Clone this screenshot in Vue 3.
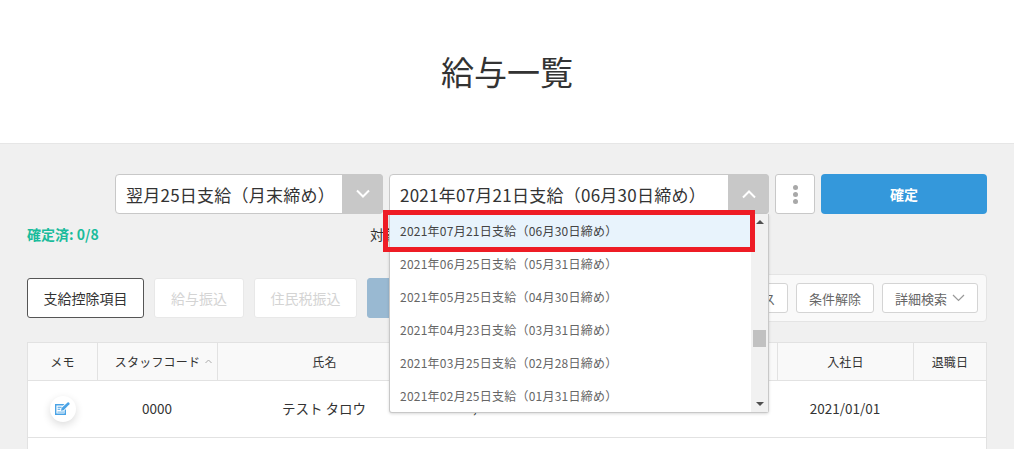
<script setup>
const options = [
  '2021年07月21日支給（06月30日締め）',
  '2021年06月25日支給（05月31日締め）',
  '2021年05月25日支給（04月30日締め）',
  '2021年04月23日支給（03月31日締め）',
  '2021年03月25日支給（02月28日締め）',
  '2021年02月25日支給（01月31日締め）'
]
</script>

<template>
  <div class="page">
    <header class="head"><h1>給与一覧</h1></header>
    <main class="body">
      <div class="controls">
        <div class="select first">
          <span class="value">翌月25日支給（月末締め）</span>
          <span class="arrow">
            <svg width="16" height="10" viewBox="0 0 16 10"><path d="M2 1.5 8 7.5 14 1.5" fill="none" stroke="#fff" stroke-width="2"/></svg>
          </span>
        </div>
        <div class="select second">
          <span class="value">2021年07月21日支給（06月30日締め）</span>
          <span class="arrow">
            <svg width="16" height="10" viewBox="0 0 16 10"><path d="M2 8.5 8 2.5 14 8.5" fill="none" stroke="#fff" stroke-width="2"/></svg>
          </span>
          <div class="dropdown">
            <ul class="list">
              <li v-for="(o, i) in options" :key="o" :class="{ active: i === 0 }">{{ o }}</li>
            </ul>
            <div class="scrollbar">
              <i class="tri up"></i>
              <b class="thumb"></b>
              <i class="tri down"></i>
            </div>
          </div>
          <div class="marker"></div>
        </div>
        <button class="kebab" aria-label="menu"><i></i><i></i><i></i></button>
        <button class="confirm">確定</button>
      </div>

      <div class="status">
        <span class="done">確定済: 0/8</span>
        <span class="target">対象期間</span>
      </div>

      <div class="tools">
        <button class="btn strong">支給控除項目</button>
        <button class="btn off a">給与振込</button>
        <button class="btn off b">住民税振込</button>
        <button class="btn blue">一括確定</button>
        <div class="filter">
          <button class="btn small status-btn">ステータス</button>
          <button class="btn small clear">条件解除</button>
          <button class="btn small more">詳細検索
            <svg width="13" height="8" viewBox="0 0 13 8"><path d="M1 1 6.5 6.5 12 1" fill="none" stroke="#999" stroke-width="1.2"/></svg>
          </button>
        </div>
      </div>

      <div class="table">
        <div class="row th">
          <div class="c memo">メモ</div>
          <div class="c code">スタッフコード<svg class="sort" width="7" height="5" viewBox="0 0 7 5"><path d="M.5 4 3.5 1 6.5 4" fill="none" stroke="#aaa" stroke-width="1"/></svg></div>
          <div class="c name">氏名</div>
          <div class="c rest"></div>
          <div class="c join">入社日</div>
          <div class="c leave">退職日</div>
        </div>
        <div class="row td">
          <div class="c memo">
            <span class="note">
              <svg width="17" height="16" viewBox="0 0 17 16">
                <path d="M1 3h9.5L9 4.4H2.4v8.2h8.2V9.4L12 8v6H1z" fill="#4aa3e6"/>
                <path d="M3.6 6.2h4M3.6 8.2h2.6" stroke="#4aa3e6" stroke-width="1.1"/>
                <path d="M3.4 10.4h6.8v1.4H3.4z" fill="#8cc6f0"/>
                <path d="M7 9.8 7.6 7 13.6 1.4c1-.7 2.6.7 1.8 1.9L9.6 9.2z" fill="#4aa3e6"/>
              </svg>
            </span>
          </div>
          <div class="c code lift">0000</div>
          <div class="c name lift">テスト タロウ</div>
          <div class="c rest tail">,</div>
          <div class="c join lift">2021/01/01</div>
          <div class="c leave"></div>
        </div>
        <div class="row blank"></div>
      </div>
    </main>
  </div>
</template>

<style>
html, body { margin: 0; height: 100%; overflow: hidden; background: #f0f0f0; }
</style>

<style scoped>
.page {
  height: 449px;
  overflow: hidden;
  background: #f0f0f0;
  color: #333;
  font-family: "Noto Sans CJK JP", "Noto Sans", sans-serif;
}
button { font-family: inherit; padding: 0; box-sizing: border-box; }
.head {
  height: 143px;
  box-sizing: content-box;
  background: #fff;
  border-bottom: 1px solid #e6e6e6;
  display: flex;
  align-items: center;
  justify-content: center;
}
.head h1 { margin: 0 0 2px; font-size: 33px; font-weight: 400; line-height: 48px; }
.body { padding: 30px 27px 0; }
.controls { display: flex; justify-content: flex-end; height: 40px; gap: 6px; }
.select {
  position: relative;
  box-sizing: border-box;
  display: flex;
  align-items: center;
  height: 40px;
  background: #fff;
  border: 1px solid #c8c8c8;
  border-radius: 4px;
}
.select.first { width: 268px; }
.select.second { width: 380px; }
.value { flex: 1; padding-left: 10px; font-size: 17px; letter-spacing: .25px; white-space: nowrap; }
.arrow {
  width: 41px;
  height: 40px;
  margin: -1px -1px -1px 0;
  background: #c8c8c8;
  border-radius: 0 4px 4px 0;
  display: flex;
  align-items: center;
  justify-content: center;
}
.dropdown {
  position: absolute;
  left: -1px;
  top: 39px;
  width: 378px;
  height: 198px;
  display: flex;
  background: #fff;
  border: 1px solid #c8c8c8;
  border-top: 0;
  border-radius: 0 0 3px 3px;
  box-shadow: 0 1px 3px rgba(0,0,0,.15);
  z-index: 5;
}
.list { flex: 1; margin: 0; padding: 0; list-style: none; overflow: hidden; }
.list li {
  height: 33px;
  line-height: 33px;
  padding-left: 10px;
  font-size: 12px;
  letter-spacing: .02em;
  color: #666;
  white-space: nowrap;
}
.list li.active { background: #e8f3fc; color: #444; }
.scrollbar { position: relative; width: 17px; background: #f1f1f1; }
.thumb { position: absolute; left: 2px; right: 2px; top: 116px; height: 17px; background: #c1c1c1; }
.tri { position: absolute; left: 5px; width: 0; height: 0; border-left: 4px solid transparent; border-right: 4px solid transparent; }
.tri.up { top: 6px; border-bottom: 4px solid #505050; }
.tri.down { bottom: 6px; border-top: 4px solid #505050; }
.marker {
  position: absolute;
  left: -7px;
  top: 35px;
  width: 372px;
  height: 42px;
  box-sizing: border-box;
  border: 5px solid #ee1c25;
  z-index: 6;
}
.kebab {
  width: 40px;
  height: 40px;
  background: #fff;
  border: 1px solid #c8c8c8;
  border-radius: 3px;
  display: flex;
  flex-direction: column;
  align-items: center;
  justify-content: center;
  gap: 2px;
}
.kebab i { width: 5px; height: 5px; border-radius: 50%; background: #a8a8a8; }
.confirm {
  width: 166px;
  height: 40px;
  border: 0;
  border-radius: 4px;
  background: #3498db;
  color: #fff;
  font-size: 14px;
  font-weight: 700;
}
.status {
  display: flex;
  align-items: center;
  height: 20px;
  margin-top: 10px;
  font-size: 14px;
}
.done { color: #1abc9c; font-weight: 700; width: 343px; }
.target { white-space: nowrap; }
.tools { display: flex; align-items: flex-start; height: 48px; margin-top: 30px; gap: 10px; position: relative; }
.btn {
  height: 40px;
  margin-top: 4px;
  background: #fff;
  border: 1px solid #ddd;
  border-radius: 3px;
  font-size: 14px;
  color: #333;
  white-space: nowrap;
}
.btn.strong { width: 117px; border-color: #555; }
.btn.off { color: #d4d4d4; border-color: #e8e8e8; }
.btn.a { width: 90px; }
.btn.b { width: 103px; }
.btn.blue { width: 120px; background: #99b9d2; border-color: #99b9d2; color: #fff; }
.filter {
  margin-left: auto;
  box-sizing: border-box;
  height: 48px;
  padding: 8px 8px 0;
  display: flex;
  align-items: flex-start;
  gap: 8px;
  background: #f9f9f9;
  border: 1px solid #e4e4e4;
  border-radius: 4px;
}
.btn.small { margin: 0; height: 30px; font-size: 13px; color: #666; border-color: #d4d4d4; }
.status-btn { width: 90px; }
.clear { width: 78px; }
.more { width: 96px; display: flex; align-items: center; justify-content: center; gap: 5px; }
.table { margin-top: 20px; background: #fff; border: 1px solid #e2e2e2; border-bottom: 0; }
.row { display: flex; border-bottom: 1px solid #e2e2e2; }
.th { height: 37px; background: #f9f9f9; font-size: 12px; letter-spacing: .02em; }
.td { height: 56px; font-size: 13.5px; line-height: 20px; }
.blank { height: 40px; border: 0; }
.c { display: flex; align-items: center; justify-content: center; box-sizing: border-box; }
.th .c + .c { border-left: 1px solid #e2e2e2; }
.lift { padding-bottom: 2px; }
.memo { width: 69px; }
.code { width: 120px; }
.name { width: 214px; }
.rest { flex: 1; }
.tail { justify-content: flex-start; padding: 0 0 4px 42px; }
.join { width: 136px; }
.leave { width: 73px; }
.sort { margin: 0 -12px 0 5px; }
.note {
  width: 26px;
  height: 26px;
  border-radius: 50%;
  background: #fff;
  box-shadow: 0 3px 8px rgba(0,0,0,.14);
  display: flex;
  align-items: center;
  justify-content: center;
}
</style>
